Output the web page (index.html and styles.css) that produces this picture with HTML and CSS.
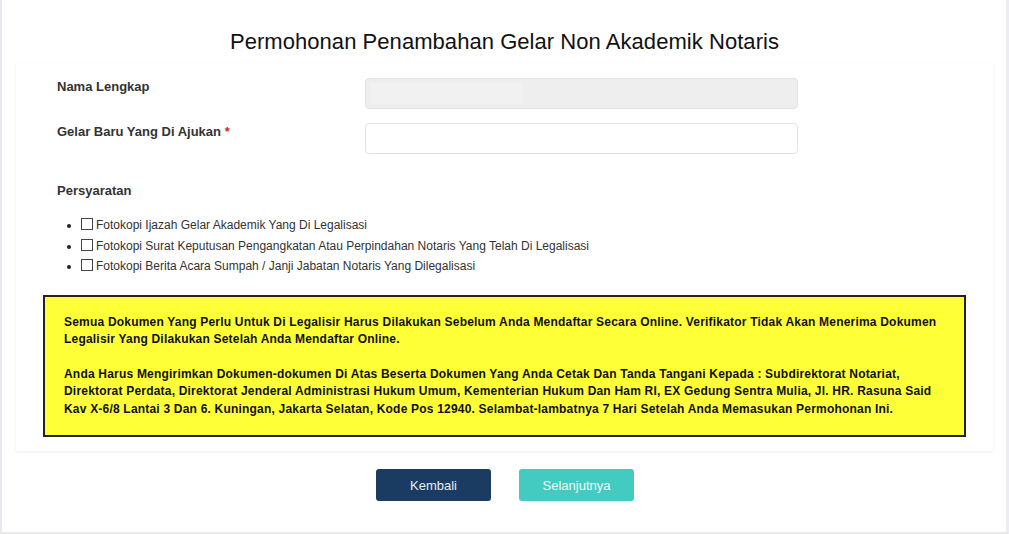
FILE: index.html
```html
<!DOCTYPE html>
<html>
<head>
    <title>Permohonan Penambahan Gelar Non Akademik Notaris</title>
    <link rel="stylesheet" href="styles.css">
</head>
<body>
    <div class="page">
        <h1 class="page-title">Permohonan Penambahan Gelar Non Akademik Notaris</h1>

        <div class="card">
            <div class="form-row">
                <label class="form-label">Nama Lengkap</label>
                <div class="input-box readonly"><span class="autofill"></span></div>
            </div>
            <div class="form-row">
                <label class="form-label">Gelar Baru Yang Di Ajukan <span class="required">*</span></label>
                <input type="text" class="input-box">
            </div>

            <div class="section-label">Persyaratan</div>
            <ul class="req-list">
                <li><span class="check"></span>Fotokopi Ijazah Gelar Akademik Yang Di Legalisasi</li>
                <li><span class="check"></span>Fotokopi Surat Keputusan Pengangkatan Atau Perpindahan Notaris Yang Telah Di Legalisasi</li>
                <li><span class="check"></span>Fotokopi Berita Acara Sumpah / Janji Jabatan Notaris Yang Dilegalisasi</li>
            </ul>

            <div class="notice">
                <p>Semua Dokumen Yang Perlu Untuk Di Legalisir Harus Dilakukan Sebelum Anda Mendaftar Secara Online. Verifikator Tidak Akan Menerima Dokumen Legalisir Yang Dilakukan Setelah Anda Mendaftar Online.</p>
                <p>Anda Harus Mengirimkan Dokumen-dokumen Di Atas Beserta Dokumen Yang Anda Cetak Dan Tanda Tangani Kepada : Subdirektorat Notariat, Direktorat Perdata, Direktorat Jenderal Administrasi Hukum Umum, Kementerian Hukum Dan Ham RI, EX Gedung Sentra Mulia, Jl. HR. Rasuna Said Kav X-6/8 Lantai 3 Dan 6. Kuningan, Jakarta Selatan, Kode Pos 12940. Selambat-lambatnya 7 Hari Setelah Anda Memasukan Permohonan Ini.</p>
            </div>
        </div>

        <div class="actions">
            <button class="btn btn-back">Kembali</button>
            <button class="btn btn-next">Selanjutnya</button>
        </div>
    </div>
</body>
</html>
```

FILE: styles.css
```css
body {
    font-family: "Liberation Sans", Arial, sans-serif;
    margin: 0;
    padding: 0;
    background-color: white;
    color: #333;
}

.page {
    height: 532px;
    border-left: 2px solid #e8e8ef;
    border-right: 3px solid #ececf1;
    border-bottom: 2px solid #e8e8ed;
    padding: 0 13px 0 14px;
}

.page-title {
    margin: 0;
    padding-top: 29px;
    height: 34px;
    font-size: 22px;
    font-weight: normal;
    color: #111;
    text-align: center;
    line-height: 26px;
    letter-spacing: 0.05px;
}

.card {
    background: white;
    box-shadow: 0 1px 3px rgba(0, 0, 0, 0.07);
    padding: 15px 27px 14px 27px;
}

.form-row {
    display: grid;
    grid-template-columns: 308px 433px;
    margin-left: 14px;
    margin-bottom: 14px;
}

.form-label {
    font-size: 13px;
    font-weight: bold;
    line-height: 17px;
    color: #333;
}

.required {
    color: #d9232d;
}

.input-box {
    box-sizing: border-box;
    height: 31px;
    border: 1px solid #e3e3e3;
    border-radius: 4px;
    background: white;
    margin: 0;
    padding: 4px;
}

.input-box.readonly {
    background: #eeeeee;
    border-color: #e2e2e2;
}

.autofill {
    display: block;
    width: 153px;
    height: 21px;
    background: #f1f1f1;
}

.section-label {
    margin: 28px 0 0 14px;
    font-size: 13px;
    font-weight: bold;
    line-height: 17px;
}

.req-list {
    margin: 16px 0 0 14px;
    padding-left: 24px;
    list-style: disc;
    font-size: 12px;
    line-height: 20.5px;
    color: #333;
}

.req-list li::marker {
    font-size: 12px;
    color: #222;
}

.check {
    display: inline-block;
    width: 10px;
    height: 10px;
    border: 1px solid #444;
    margin-right: 3px;
    vertical-align: -1px;
}

.notice {
    margin-top: 18px;
    background: #ffff38;
    border: 2px solid #222;
    padding: 17px 20px 17px 19px;
    font-size: 12px;
    font-weight: bold;
    line-height: 17.5px;
    letter-spacing: 0.2px;
    color: #111;
}

.notice p {
    margin: 0;
}

.notice p + p {
    margin-top: 17px;
}

.actions {
    display: flex;
    justify-content: center;
    gap: 28px;
    margin-top: 18px;
    padding-left: 1px;
}

.btn {
    width: 115px;
    height: 32px;
    border: none;
    border-radius: 3px;
    font-family: "Liberation Sans", Arial, sans-serif;
    font-size: 13px;
    cursor: pointer;
}

.btn-back {
    background-color: #1b3c62;
    color: #e6edf4;
}

.btn-next {
    background-color: #43cbc1;
    color: #eefaf9;
}
```
